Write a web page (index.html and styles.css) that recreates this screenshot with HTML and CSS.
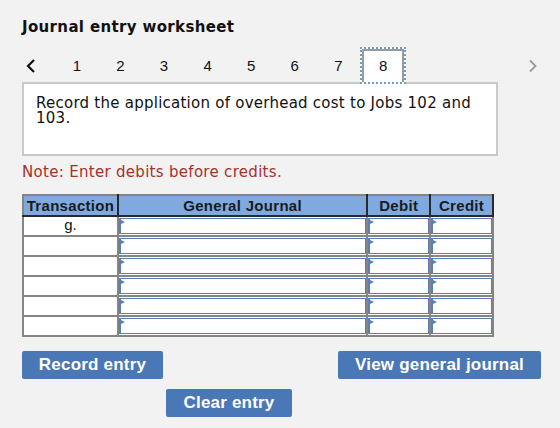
FILE: index.html
```html
<!DOCTYPE html>
<html lang="en">
<head>
  <meta charset="UTF-8" />
  <title>Journal entry worksheet</title>
  <meta name="viewport" content="width=device-width, initial-scale=1" />
  <link rel="stylesheet" href="styles.css">
</head>
<body>
  <div class="worksheet">
    <h2 class="title">Journal entry worksheet</h2>

    <div class="tabs">
      <span class="arrow prev">
        <svg width="10" height="14" viewBox="0 0 10 14"><path d="M8 1 L2 7 L8 13" fill="none" stroke="#111" stroke-width="2.2"/></svg>
      </span>
      <div class="tab-list">
        <span class="tab">1</span>
        <span class="tab">2</span>
        <span class="tab">3</span>
        <span class="tab">4</span>
        <span class="tab">5</span>
        <span class="tab">6</span>
        <span class="tab">7</span>
        <span class="tab active">8</span>
      </div>
      <span class="arrow next">
        <svg width="10" height="14" viewBox="0 0 10 14"><path d="M2 1.5 L7.5 7 L2 12.5" fill="none" stroke="#9a9a9a" stroke-width="1.8"/></svg>
      </span>
    </div>

    <div class="prompt">Record the application of overhead cost to Jobs 102 and 103.</div>

    <p class="note">Note: Enter debits before credits.</p>

    <table class="journal">
      <thead>
        <tr>
          <th class="col-trans">Transaction</th>
          <th class="col-journal">General Journal</th>
          <th class="col-amount">Debit</th>
          <th class="col-amount">Credit</th>
        </tr>
      </thead>
      <tbody>
        <tr>
          <td class="trans">g.</td>
          <td><div class="field"></div></td>
          <td><div class="field"></div></td>
          <td><div class="field"></div></td>
        </tr>
        <tr>
          <td class="trans"></td>
          <td><div class="field"></div></td>
          <td><div class="field"></div></td>
          <td><div class="field"></div></td>
        </tr>
        <tr>
          <td class="trans"></td>
          <td><div class="field"></div></td>
          <td><div class="field"></div></td>
          <td><div class="field"></div></td>
        </tr>
        <tr>
          <td class="trans"></td>
          <td><div class="field"></div></td>
          <td><div class="field"></div></td>
          <td><div class="field"></div></td>
        </tr>
        <tr>
          <td class="trans"></td>
          <td><div class="field"></div></td>
          <td><div class="field"></div></td>
          <td><div class="field"></div></td>
        </tr>
        <tr>
          <td class="trans"></td>
          <td><div class="field"></div></td>
          <td><div class="field"></div></td>
          <td><div class="field"></div></td>
        </tr>
      </tbody>
    </table>

    <div class="actions">
      <div class="actions-row">
        <button class="btn btn-record">Record entry</button>
        <button class="btn btn-view">View general journal</button>
      </div>
      <div class="actions-row second">
        <button class="btn btn-clear">Clear entry</button>
      </div>
    </div>
  </div>
</body>
</html>
```

FILE: styles.css
```css
:root {
  --bg: #f2f2f2;
  --text: #111111;
  --note: #a8302b;
  --head: #80a9e0;
  --grid: #858585;
  --field: #5b7eb5;
  --btn: #4a77b5;
}

* {
  box-sizing: border-box;
}

body {
  margin: 0;
  background-color: var(--bg);
  color: var(--text);
  font-family: 'DejaVu Sans', Verdana, sans-serif;
}

.worksheet {
  padding: 0 19px 0 22px;
}

.title {
  margin: 18px 0 0;
  font-size: 15px;
  line-height: 18px;
  font-weight: 700;
  letter-spacing: 0.35px;
}

.tabs {
  display: flex;
  align-items: center;
  height: 37px;
  margin-top: 11px;
  position: relative;
  z-index: 1;
}

.arrow {
  display: flex;
  align-items: center;
}

.arrow.prev {
  width: 33px;
  padding-left: 4px;
}

.arrow.next {
  margin-left: auto;
  padding-right: 3px;
}

.tab-list {
  display: flex;
  height: 100%;
}

.tab {
  width: 43.6px;
  display: flex;
  align-items: center;
  justify-content: center;
  font-family: 'Liberation Sans', Arial, sans-serif;
  font-size: 15px;
}

.tab.active {
  width: 46px;
  background: #ffffff;
  border: 2px dotted #6c9bd5;
  box-shadow: inset 2px 0 0 #9a9a9a, inset -2px 0 0 #9a9a9a, inset 0 2px 0 #9a9a9a;
}

.prompt {
  width: 476px;
  height: 74px;
  margin-top: -2px;
  padding: 12px 10px 0 12px;
  background: #ffffff;
  border: 2px solid #c9c9c9;
  font-size: 15px;
  line-height: 15px;
  letter-spacing: 0.25px;
}

.note {
  margin: 8px 0 0;
  font-size: 15px;
  line-height: 17px;
  letter-spacing: 0.3px;
  color: var(--note);
}

.journal {
  margin-top: 13px;
  width: 472px;
  border-collapse: collapse;
  border: 2px solid var(--grid);
  font-family: 'Liberation Sans', Arial, sans-serif;
}

.journal th {
  height: 21px;
  padding: 0;
  background: var(--head);
  border-right: 2px solid #2a2a2a;
  border-bottom: 2px solid #2a2a2a;
  font-size: 15px;
  font-weight: 700;
  letter-spacing: 0.3px;
  color: #1a1a1a;
}

.col-trans {
  width: 95px;
}

.col-journal {
  width: 251px;
}

.col-amount {
  width: 63px;
}

.journal td {
  height: 20px;
  padding: 0;
  background: #ffffff;
  border: 2px solid var(--grid);
}

.journal td.trans {
  text-align: center;
  font-size: 15px;
  line-height: 16px;
  vertical-align: top;
}

.field {
  position: relative;
  height: 16px;
  border: 1px solid var(--field);
  border-left-width: 2px;
}

.field::before {
  content: "";
  position: absolute;
  left: 0;
  top: 1px;
  border-left: 4px solid var(--field);
  border-top: 2px solid transparent;
  border-bottom: 2px solid transparent;
}

.actions {
  margin-top: 14px;
}

.actions-row {
  display: flex;
  justify-content: space-between;
}

.actions-row.second {
  margin-top: 10px;
  padding-left: 144px;
}

.btn {
  height: 28px;
  padding: 0;
  border: none;
  border-radius: 2px;
  background: var(--btn);
  color: #ffffff;
  font-family: 'Liberation Sans', Arial, sans-serif;
  font-size: 17px;
  font-weight: 700;
  letter-spacing: 0.2px;
}

.btn-record {
  width: 141px;
}

.btn-view {
  width: 203px;
}

.btn-clear {
  width: 126px;
}
```
